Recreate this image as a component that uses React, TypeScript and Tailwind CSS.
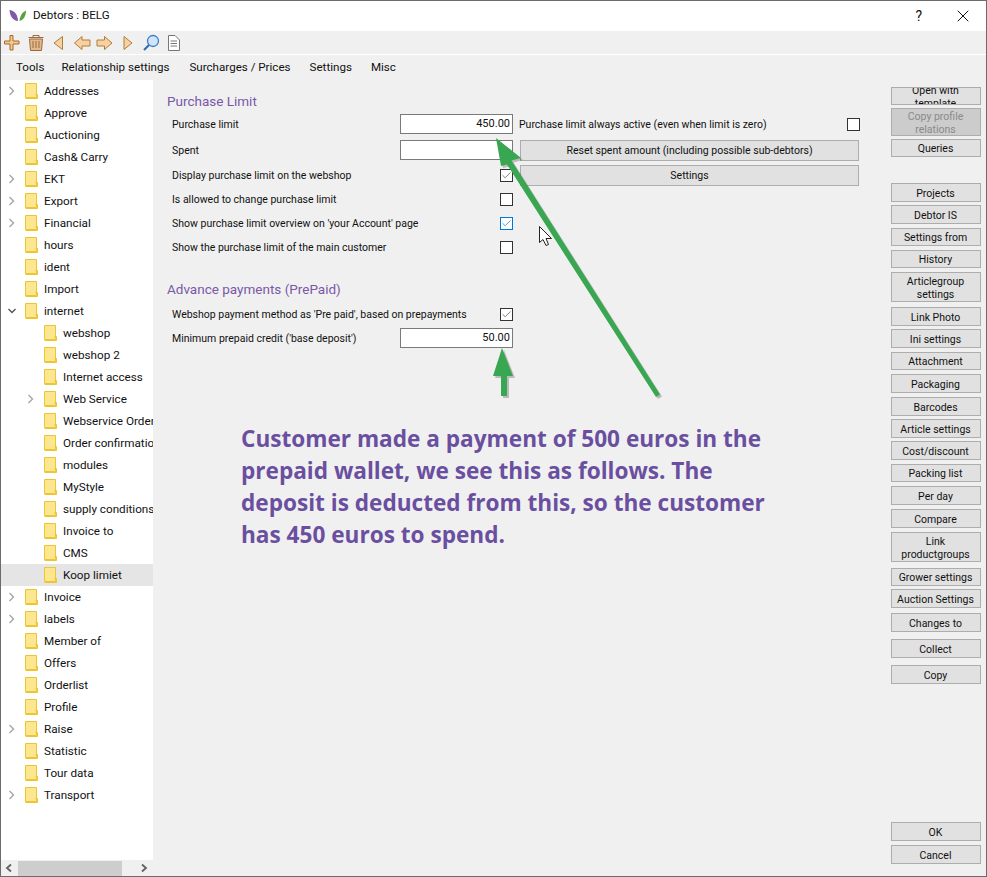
import { X, Check } from "lucide-react";

const FONT = "font-['Roboto','Open_Sans',sans-serif]";

type TreeItem = { label: string; expand?: "closed" | "open"; child?: boolean; selected?: boolean };

const treeItems: TreeItem[] = [
  { label: "Addresses", expand: "closed" },
  { label: "Approve" },
  { label: "Auctioning" },
  { label: "Cash& Carry" },
  { label: "EKT", expand: "closed" },
  { label: "Export", expand: "closed" },
  { label: "Financial", expand: "closed" },
  { label: "hours" },
  { label: "ident" },
  { label: "Import" },
  { label: "internet", expand: "open" },
  { label: "webshop", child: true },
  { label: "webshop 2", child: true },
  { label: "Internet access", child: true },
  { label: "Web Service", child: true, expand: "closed" },
  { label: "Webservice Orders", child: true },
  { label: "Order confirmation", child: true },
  { label: "modules", child: true },
  { label: "MyStyle", child: true },
  { label: "supply conditions", child: true },
  { label: "Invoice to", child: true },
  { label: "CMS", child: true },
  { label: "Koop limiet", child: true, selected: true },
  { label: "Invoice", expand: "closed" },
  { label: "labels", expand: "closed" },
  { label: "Member of" },
  { label: "Offers" },
  { label: "Orderlist" },
  { label: "Profile" },
  { label: "Raise", expand: "closed" },
  { label: "Statistic" },
  { label: "Tour data" },
  { label: "Transport", expand: "closed" },
];

const Folder = () => (
  <svg width="13" height="16" viewBox="0 0 13 16" className="shrink-0">
    <path d="M0.5 0.5H11.5V14.5H0.5Z" fill="#fde690" stroke="#ecc52f" />
    <path d="M10.5 11.5H12.5V15.5H0.5" fill="none" stroke="#ecc52f" />
  </svg>
);

const Chevron = ({ open }: { open?: boolean }) => (
  <svg width="8" height="10" viewBox="0 0 8 10" className="shrink-0">
    {open ? (
      <path d="M0.5 3L4 6.5L7.5 3" fill="none" stroke="#555555" strokeWidth="1.4" />
    ) : (
      <path d="M1.5 1L5.5 5L1.5 9" fill="none" stroke="#a6a6a6" strokeWidth="1.4" />
    )}
  </svg>
);

const TreeRow = ({ item }: { item: TreeItem }) => (
  <div className={`flex h-[22px] items-center whitespace-nowrap ${item.selected ? "bg-[#e5e5e5]" : ""}`}>
    <div className={`flex shrink-0 ${item.child ? "w-[43px] pl-[26px]" : "w-[24px] pl-[7px]"}`}>
      {item.expand && <Chevron open={item.expand === "open"} />}
    </div>
    <Folder />
    <span className="ml-[6px] pt-px text-[11.7px] text-[#111111]">{item.label}</span>
  </div>
);

const Toolbar = () => (
  <div className="flex h-[23px] items-center bg-[#f0f0f0] pl-[3px]">
    <svg width="180" height="20" viewBox="0 0 180 20">
      {/* add */}
      <path d="M6 2.5H9V8H15V11H9V17H6V11H0.5V8H6Z" fill="#f5c88e" stroke="#a8692c" />
      {/* delete */}
      <path d="M25.5 6H38.5L37.5 17.5H26.5Z" fill="#e3b98c" stroke="#9b6a3c" />
      <path d="M24.5 4.5H39.5M29 4V2.5H35V4M29 8V15M32 8V15M35 8V15" fill="none" stroke="#9b6a3c" />
      {/* first */}
      <path d="M58.5 3.5V16.5L50 10Z" fill="#fbd0a0" stroke="#a8803c" />
      {/* back */}
      <path d="M70.500 10L78 3.500V7H86V13H78V16.500Z" fill="#fbd0a0" stroke="#a8803c" />
      {/* forward */}
      <path d="M108 10L100.500 3.500V7H93V13H100.500V16.500Z" fill="#fbd0a0" stroke="#a8803c" />
      {/* last */}
      <path d="M120 3.5V16.5L128 10Z" fill="#fbd0a0" stroke="#a8803c" />
      {/* search */}
      <circle cx="149" cy="8" r="5.5" fill="#cfe6fa" stroke="#3b7fc4" strokeWidth="1.3" />
      <path d="M145 12L140 17" stroke="#2f6fb5" strokeWidth="2.2" />
      {/* page */}
      <path d="M164.5 2.5H171L175.500 7V17.500H164.500Z" fill="#ffffff" stroke="#777777" />
      <path d="M166.500 8H173M166.500 10.500H173M166.500 13H173" stroke="#777777" />
    </svg>
  </div>
);

const Box = ({ state }: { state?: "checked" | "blue" }) => (
  <div
    className={`flex h-[13px] w-[13px] items-center justify-center border bg-white ${
      state === "blue" ? "border-[#0078d7]" : "border-[#333333]"
    }`}
  >
    {state && (
      <Check size={11} strokeWidth={1.5} className={state === "blue" ? "text-[#0078d7]" : "text-[#444444]"} />
    )}
  </div>
);

const NumberBox = ({ value }: { value?: string }) => (
  <div className="flex h-[20px] w-[113px] shrink-0 items-center justify-end border border-[#7a7a7a] bg-white pr-[2px] text-[11px] text-[#111111]">
    {value}
  </div>
);

const Row = ({ label, children, className = "" }: { label: string; children: React.ReactNode; className?: string }) => (
  <div className={`flex h-[20px] items-center ${className}`}>
    <span className="w-[228px] shrink-0 pt-px text-[10.5px] whitespace-nowrap text-[#111111]">{label}</span>
    {children}
  </div>
);

const CheckCell = ({ state }: { state?: "checked" | "blue" }) => (
  <div className="flex w-[113px] shrink-0 justify-end">
    <Box state={state} />
  </div>
);

const WideButton = ({ label }: { label: string }) => (
  <div className="ml-[7px] flex h-[21px] w-[339px] items-center justify-center border border-[#adadad] bg-[#e1e1e1] pt-px text-[10.5px] text-[#111111]">
    {label}
  </div>
);

type SideBtn = { label: string; h: number; mt: string; disabled?: boolean };

const SideButton = ({ label, h, mt, disabled }: SideBtn) => (
  <div
    style={{ height: h }}
    className={`flex w-[90px] items-center justify-center overflow-hidden border border-[#adadad] pt-px pr-px text-center text-[10.5px] leading-[13px] ${mt} ${
      disabled ? "bg-[#cccccc] text-[#8a8a8a]" : "bg-[#e1e1e1] text-[#111111]"
    }`}
  >
    <span className="block">{label}</span>
  </div>
);

const sideButtons: SideBtn[] = [
  { label: "Open with template", h: 18, mt: "mt-[7px]" },
  { label: "Copy profile relations", h: 28, mt: "mt-[3px]", disabled: true },
  { label: "Queries", h: 18, mt: "mt-[3px]" },
  { label: "Projects", h: 19, mt: "mt-[26px]" },
  { label: "Debtor IS", h: 19, mt: "mt-[3px]" },
  { label: "Settings from", h: 18, mt: "mt-[4px]" },
  { label: "History", h: 18, mt: "mt-[4px]" },
  { label: "Articlegroup settings", h: 30, mt: "mt-[4px]" },
  { label: "Link Photo", h: 19, mt: "mt-[5px]" },
  { label: "Ini settings", h: 19, mt: "mt-[3px]" },
  { label: "Attachment", h: 18, mt: "mt-[4px]" },
  { label: "Packaging", h: 19, mt: "mt-[4px]" },
  { label: "Barcodes", h: 19, mt: "mt-[4px]" },
  { label: "Article settings", h: 19, mt: "mt-[3px]" },
  { label: "Cost/discount", h: 19, mt: "mt-[3px]" },
  { label: "Packing list", h: 18, mt: "mt-[4px]" },
  { label: "Per day", h: 19, mt: "mt-[4px]" },
  { label: "Compare", h: 19, mt: "mt-[4px]" },
  { label: "Link productgroups", h: 30, mt: "mt-[4px]" },
  { label: "Grower settings", h: 18, mt: "mt-[6px]" },
  { label: "Auction Settings", h: 19, mt: "mt-[3px]" },
  { label: "Changes to", h: 19, mt: "mt-[5px]" },
  { label: "Collect", h: 19, mt: "mt-[7px]" },
  { label: "Copy", h: 19, mt: "mt-[7px]" },
];

const ArrowsOverlay = () => (
  <svg width="987" height="877" viewBox="0 0 987 877" className="pointer-events-none absolute top-0 left-0">
    <g fill="#000000" opacity="0.22" transform="translate(2 2)">
      <path d="M495 137L520 157L510.5 159.5L659 393.5L655 396L506 163.500L500 165Z" />
      <path d="M501 347L512 375H506V395H500V375H492Z" />
    </g>
    <g fill="#39a651">
      <path d="M495 137L520 157L510.5 159.5L659 393.5L655 396L506 163.500L500 165Z" />
      <path d="M501 347L512 375H506V395H500V375H492Z" />
    </g>
    {/* mouse cursor */}
    <path
      d="M538.5 225.500V241.500L542 238.500L545 244.500L547.500 243.500L545 237.500H550.500Z"
      fill="#ffffff"
      stroke="#222222"
      strokeWidth="1"
    />
  </svg>
);

export default function App() {
  return (
    <div className={`relative flex h-[877px] w-[987px] flex-col overflow-hidden border border-[#6b6b6b] bg-[#f0f0f0] ${FONT}`}>
      {/* Title bar */}
      <div className="flex h-[30px] shrink-0 items-center bg-white text-[11.6px] text-[#111111]">
        <svg width="18" height="14" viewBox="0 0 18 14" className="ml-[8px]">
          <path d="M0.5 1C5 1.500 8.500 4.500 9 12C4 11.500 1 7.500 0.500 1Z" fill="#7d5ba6" />
          <path d="M17 1.500C13.500 3 11 6.500 10.500 12C14.500 11 17 7 17 1.500Z" fill="#5d9e3f" />
        </svg>
        <span className="ml-[6px]">Debtors : BELG</span>
        <span className="ml-auto text-[14px]">?</span>
        <X size={20} strokeWidth={1.2} className="mr-[13px] ml-[31px] text-[#111111]" />
      </div>

      <Toolbar />
      <div className="h-px shrink-0 bg-white" />

      {/* Menu */}
      <div className="flex h-[25px] shrink-0 items-center pt-px text-[11.6px] text-[#111111]">
        <span className="ml-[15px]">Tools</span>
        <span className="ml-[17px]">Relationship settings</span>
        <span className="ml-[20px]">Surcharges / Prices</span>
        <span className="ml-[19px]">Settings</span>
        <span className="ml-[19px]">Misc</span>
      </div>

      <div className="flex min-h-0 flex-1">
        {/* Tree */}
        <div className="flex w-[152px] shrink-0 flex-col">
          <div className="flex-1 overflow-hidden bg-white">
            {treeItems.map((item) => (
              <TreeRow key={item.label} item={item} />
            ))}
          </div>
          <div className="flex h-[16px] shrink-0 items-center bg-[#f0f0f0]">
            <svg width="8" height="10" viewBox="0 0 8 10" className="ml-[4px]">
              <path d="M6 1.500L2 5L6 8.500" fill="none" stroke="#606060" strokeWidth="1.800" />
            </svg>
            <div className="ml-[5px] h-[15px] w-[104px] bg-[#cdcdcd]" />
            <svg width="8" height="10" viewBox="0 0 8 10" className="ml-[18px]">
              <path d="M2 1.500L6 5L2 8.500" fill="none" stroke="#606060" strokeWidth="1.800" />
            </svg>
          </div>
        </div>

        {/* Form */}
        <div className="w-[738px] shrink-0 pl-[19px]">
          <div className="-ml-[5px] pt-[13px] text-[13.5px] leading-[17px] text-[#7a58a8]">Purchase Limit</div>
          <Row label="Purchase limit" className="mt-[4px]">
            <NumberBox value="450.00" />
            <span className="ml-[6px] w-[328px] shrink-0 pt-px text-[10.5px] whitespace-nowrap text-[#111111]">
              Purchase limit always active (even when limit is zero)
            </span>
            <Box />
          </Row>
          <Row label="Spent" className="mt-[6px]">
            <NumberBox />
            <WideButton label="Reset spent amount (including possible sub-debtors)" />
          </Row>
          <Row label="Display purchase limit on the webshop" className="mt-[5px]">
            <CheckCell state="checked" />
            <WideButton label="Settings" />
          </Row>
          <Row label="Is allowed to change purchase limit" className="mt-[4px]">
            <CheckCell />
          </Row>
          <Row label="Show purchase limit overview on 'your Account' page" className="mt-[4px]">
            <CheckCell state="blue" />
          </Row>
          <Row label="Show the purchase limit of the main customer" className="mt-[4px]">
            <CheckCell />
          </Row>
          <div className="mt-[24px] -ml-[5px] text-[13.5px] leading-[17px] text-[#7a58a8]">Advance payments (PrePaid)</div>
          <Row label="Webshop payment method as 'Pre paid', based on prepayments" className="mt-[6px]">
            <CheckCell state="checked" />
          </Row>
          <Row label="Minimum prepaid credit ('base deposit')" className="mt-[4px]">
            <NumberBox value="50.00" />
          </Row>
          <p className="mt-[75px] ml-[69px] w-[532px] font-['Open_Sans',sans-serif] text-[22.6px] leading-[32px] font-bold text-[#6a4fa0]">
            Customer made a payment of 500 euros in the prepaid wallet, we see this as follows. The deposit is deducted
            from this, so the customer has 450 euros to spend.
          </p>
        </div>

        {/* Side buttons */}
        <div className="flex w-[90px] shrink-0 flex-col">
          {sideButtons.map((b) => (
            <SideButton key={b.label} {...b} />
          ))}
          <SideButton label="OK" h={19} mt="mt-auto" />
          <SideButton label="Cancel" h={19} mt="mt-[4px] mb-[12px]" />
        </div>
      </div>

      <ArrowsOverlay />
    </div>
  );
}
